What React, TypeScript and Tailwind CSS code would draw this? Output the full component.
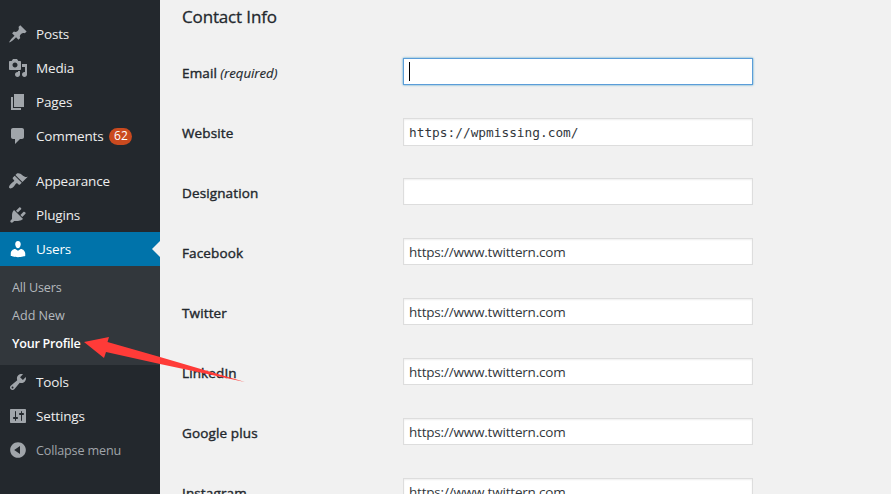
import clsx from "clsx";

type MenuItem = {
  label: string;
  icon: string;
  count?: number;
};

// 20x20 glyphs for the admin menu
const ICONS: Record<string, string> = {
  post: "M10.44 3.02l1.82-1.82 6.36 6.35-1.83 1.82c-1.05-.68-2.48-.57-3.41.36l-.75.75c-.92.93-1.04 2.35-.35 3.41l-1.83 1.82-2.41-2.41-2.8 2.79c-.42.42-3.38 2.71-3.8 2.29s1.86-3.39 2.28-3.81l2.79-2.79L4.1 9.36l1.83-1.82c1.05.69 2.48.57 3.4-.36l.75-.75c.93-.92 1.05-2.35.36-3.41z",
  media:
    "M13 11V4c0-.55-.45-1-1-1h-1.67L9 1H5L3.67 3H2c-.55 0-1 .45-1 1v7c0 .55.45 1 1 1h10c.55 0 1-.45 1-1zM7 4.5c1.38 0 2.5 1.12 2.5 2.5S8.38 9.5 7 9.5 4.5 8.38 4.5 7 5.62 4.5 7 4.5zM14 6h5v10.5c0 1.38-1.12 2.5-2.5 2.5S14 17.88 14 16.5s1.12-2.5 2.5-2.5c.17 0 .34.02.5.05V9h-3V6zm-4 8.05V13h2v3.5c0 1.38-1.12 2.5-2.5 2.5S7 17.88 7 16.5 8.12 14 9.5 14c.17 0 .34.02.5.05z",
  page: "M6 15V2h10v13H6zm-1 1h8v2H3V5h2v11z",
  comments: "M5 2h9c1.1 0 2 .9 2 2v7c0 1.1-.9 2-2 2h-2l-5 5v-5H5c-1.1 0-2-.9-2-2V4c0-1.1.9-2 2-2z",
  appearance:
    "M14.48 11.06L7.41 3.99l1.5-1.5c.5-.56 2.3-.47 3.51.32 1.21.8 1.43 1.28 2.91 2.1 1.18.64 2.45 1.26 4.45.85zm-.71.71L6.7 4.7 4.93 6.47c-.39.39-.39 1.02 0 1.41l1.06 1.06c.39.39.39 1.03 0 1.42-.6.6-1.43 1.11-2.21 1.69-.35.26-.7.53-1.01.84C1.43 14.23.4 16.08 1.4 17.07c.99 1 2.84-.03 4.18-1.36.31-.31.58-.66.85-1.02.57-.78 1.08-1.61 1.69-2.21.39-.39 1.02-.39 1.41 0l1.06 1.06c.39.39 1.02.39 1.41 0z",
  plugins:
    "M13.11 4.36L9.87 7.6 8 5.73l3.24-3.24c.35-.34 1.05-.2 1.56.32.52.51.66 1.21.31 1.55zm-8 1.77l.91-1.12 9.01 9.01-1.19.84c-.71.71-2.63 1.16-3.82 1.16H6.14L4.9 17.26c-.59.59-1.54.59-2.12 0-.59-.58-.59-1.53 0-2.12l1.24-1.24v-3.88c0-1.13.4-3.19 1.09-3.89zm7.26 3.97l3.24-3.24c.34-.35 1.04-.21 1.55.31.52.51.66 1.21.31 1.55l-3.24 3.25z",
  users:
    "M10 9.25c-2.27 0-2.73-3.44-2.73-3.44C7 4.02 7.82 2 9.97 2c2.16 0 2.98 2.02 2.71 3.81 0 0-.41 3.44-2.68 3.44zm0 2.57L12.72 10c2.39 0 4.52 2.33 4.52 4.53v2.49s-3.65 1.13-7.24 1.13c-3.65 0-7.24-1.13-7.24-1.13v-2.49c0-2.25 1.94-4.48 4.47-4.48z",
  tools:
    "M16.68 9.77c-1.34 1.34-3.3 1.67-4.95.99l-5.41 6.52c-.99.99-2.59.99-3.58 0s-.99-2.59 0-3.57l6.52-5.42c-.68-1.65-.35-3.61.99-4.95 1.28-1.28 3.12-1.62 4.72-1.06l-2.89 2.89 2.82 2.82 2.86-2.87c.53 1.58.18 3.39-1.08 4.65zM3.81 16.21c.4.39 1.04.39 1.43 0 .4-.4.4-1.04 0-1.43-.39-.4-1.03-.4-1.43 0-.39.39-.39 1.03 0 1.43z",
  settings:
    "M18 16V4c0-.55-.45-1-1-1H3c-.55 0-1 .45-1 1v12c0 .55.45 1 1 1h14c.55 0 1-.45 1-1zM8 11h1c.55 0 1 .45 1 1s-.45 1-1 1H8v1.5c0 .28-.22.5-.5.5s-.5-.22-.5-.5V13H6c-.55 0-1-.45-1-1s.45-1 1-1h1V5.5c0-.28.22-.5.5-.5s.5.22.5.5V11zm5-2h-1c-.55 0-1-.45-1-1s.45-1 1-1h1V5.5c0-.28.22-.5.5-.5s.5.22.5.5V7h1c.55 0 1 .45 1 1s-.45 1-1 1h-1v5.5c0 .28-.22.5-.5.5s-.5-.22-.5-.5V9z",
  collapse:
    "M10 2.16c4.33 0 7.84 3.51 7.84 7.84s-3.51 7.84-7.84 7.84S2.16 14.33 2.16 10 5.71 2.16 10 2.16zm2 11.72V6.12L6.18 9.97z",
};

const CONTENT_MENU: MenuItem[] = [
  { label: "Posts", icon: "post" },
  { label: "Media", icon: "media" },
  { label: "Pages", icon: "page" },
  { label: "Comments", icon: "comments", count: 62 },
];

const SITE_MENU: MenuItem[] = [
  { label: "Appearance", icon: "appearance" },
  { label: "Plugins", icon: "plugins" },
];

const FIELDS = [
  { label: "Email", required: true, value: "", focused: true },
  { label: "Website", value: "https://wpmissing.com/", mono: true },
  { label: "Designation", value: "" },
  { label: "Facebook", value: "https://www.twittern.com" },
  { label: "Twitter", value: "https://www.twittern.com" },
  { label: "LinkedIn", value: "https://www.twittern.com" },
  { label: "Google plus", value: "https://www.twittern.com" },
  { label: "Instagram", value: "https://www.twittern.com" },
];

function Icon({ name }: { name: string }) {
  return (
    <svg viewBox="0 0 20 20" className="h-5 w-5 shrink-0 fill-current">
      <path d={ICONS[name]} />
    </svg>
  );
}

function MenuRow({ item }: { item: MenuItem }) {
  return (
    <li className="flex h-[34px] items-center gap-2 pl-2 text-[#a0a5aa]">
      <Icon name={item.icon} />
      <span className="text-[#eee]">{item.label}</span>
      {item.count !== undefined && (
        <span className="-ml-0.5 flex h-[17px] w-[23px] items-center justify-center rounded-full bg-[#ca4a1f] text-[12px] tracking-normal text-white">
          {item.count}
        </span>
      )}
    </li>
  );
}

function Sidebar() {
  return (
    <nav className="w-40 shrink-0 bg-[#23282d] pt-[17px] text-[13.5px] tracking-[-0.16px]">
      <ul>
        {CONTENT_MENU.map((m) => (
          <MenuRow key={m.label} item={m} />
        ))}
      </ul>
      <ul className="mt-[11px]">
        {SITE_MENU.map((m) => (
          <MenuRow key={m.label} item={m} />
        ))}
        <li>
          <div className="relative flex h-[34px] items-center gap-2 bg-[#0073aa] pl-2 text-white">
            <Icon name="users" />
            <span>Users</span>
            <span className="absolute top-[9px] right-0 border-y-8 border-r-8 border-y-transparent border-r-[#f1f1f1]" />
          </div>
          <ul className="h-[99px] bg-[#32373c] pt-2 pl-3 text-[12.6px] leading-[28px] text-[#b4b9be]">
            <li>All Users</li>
            <li className="tracking-[-0.02px]">Add New</li>
            <li className="font-semibold tracking-[-0.25px] text-white">Your Profile</li>
          </ul>
        </li>
        <MenuRow item={{ label: "Tools", icon: "tools" }} />
        <MenuRow item={{ label: "Settings", icon: "settings" }} />
        <li className="flex h-[34px] items-center gap-2 pl-2 text-[12.6px] text-[#a0a5aa]">
          <Icon name="collapse" />
          <span className="pt-0.5">Collapse menu</span>
        </li>
      </ul>
    </nav>
  );
}

function ContactForm() {
  return (
    <main className="flex-1 pl-[22px] text-[#23282d]">
      <h2 className="h-[42px] pt-[5px] text-[17px] leading-6 font-normal tracking-[-0.15px] [-webkit-text-stroke:0.3px]">
        Contact Info
      </h2>
      {FIELDS.map((f) => (
        <div key={f.label} className="flex h-[60px] items-start">
          <label className="w-[221px] pt-[21px] text-[13.5px] leading-5 tracking-[0.13px] [-webkit-text-stroke:0.4px]">
            {f.label}
            {f.required && <em className="text-[13.2px] tracking-[-0.02px] [-webkit-text-stroke:0.15px]"> (required)</em>}
          </label>
          <div
            className={clsx(
              "mt-4 flex w-[350px] items-center border bg-white pl-[5px] text-[#32373c]",
              f.focused
                ? "border-[#5b9dd9] shadow-[0_0_2px_rgba(30,140,190,0.8)]"
                : "border-[#ddd] shadow-[inset_0_1px_2px_rgba(0,0,0,0.07)]",
              f.mono
                ? "h-7 pt-px font-['DejaVu_Sans_Mono',monospace] text-[12.8px]"
                : "h-[27px] pt-px text-[13.5px] tracking-[-0.2px]"
            )}
          >
            {f.focused ? <span className="-mt-px h-[19px] w-px bg-black" /> : f.value}
          </div>
        </div>
      ))}
    </main>
  );
}

export default function App() {
  return (
    <div className="relative flex h-[494px] w-[891px] overflow-hidden bg-[#f1f1f1] font-['Open_Sans','Noto_Sans',sans-serif]">
      <Sidebar />
      <ContactForm />
      {/* callout arrow pointing at "Your Profile" */}
      <svg viewBox="0 0 162 46" className="absolute top-[337px] left-[84px] h-[46px] w-[162px]">
        <path d="M0 5 25 0 23.5 5 76 20 161 45 76 27 22 15 20 21Z" fill="#ff3b38" />
      </svg>
    </div>
  );
}
